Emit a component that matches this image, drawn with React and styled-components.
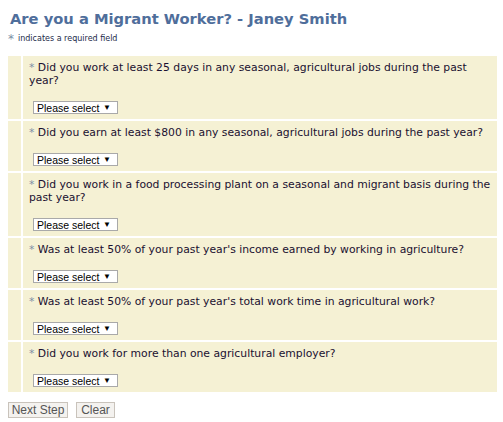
import React from "react";
import styled, { createGlobalStyle } from "styled-components";

const Global = createGlobalStyle`
  html, body { margin: 0; padding: 0; background: #ffffff; }
  body { padding: 8px; font-family: "DejaVu Sans", Verdana, sans-serif; }
`;

const Title = styled.h1`
  margin: 0;
  padding: 2px 0 0 2px;
  font-family: "DejaVu Sans", Verdana, sans-serif;
  font-weight: bold;
  font-size: 14.7px;
  line-height: 18px;
  color: #4f6e9b;
`;

const Note = styled.div`
  margin-top: 5px;
  font-size: 8px;
  line-height: 12px;
  color: #1c2b4a;
  display: flex;
  align-items: flex-start;
  gap: 4px;
`;

const Star = styled.span`
  color: #7b8fa6;
  font-size: ${(p) => p.$size || 10.8}px;
`;

const Table = styled.div`
  margin-top: 11px;
  width: 489px;
  display: flex;
  flex-direction: column;
  gap: 2px;
`;

const Row = styled.div`
  display: grid;
  grid-template-columns: 13px 1fr;
  gap: 2px;
`;

const Side = styled.div`
  background: #f5f1d4;
`;

const Cell = styled.div`
  background: #f5f1d4;
  padding: 5px 0 5px 6px;
`;

const Question = styled.div`
  font-size: 10.8px;
  line-height: 13px;
  color: #1a1030;
`;

const Select = styled.div`
  margin: 14px 0 0 4px;
  display: flex;
  align-items: center;
  justify-content: space-between;
  box-sizing: border-box;
  width: 85px;
  height: 13px;
  padding: 0 6px 0 3px;
  background: #ffffff;
  border: 1px solid #a9a9a9;
  font-family: "Liberation Sans", Arial, sans-serif;
  font-size: 10.5px;
  white-space: nowrap;
  color: #000;
`;

const Arrow = styled.span`
  font-size: 8px;
`;

const Buttons = styled.div`
  margin-top: 10px;
  display: flex;
  gap: 8px;
`;

const Button = styled.button`
  font-family: "Liberation Sans", Arial, sans-serif;
  font-size: 12px;
  color: #555;
  background: #f4f2ef;
  border: 1px solid #c9c3bb;
  padding: 0;
  width: ${(p) => p.$w}px;
  height: 16px;
  line-height: 14px;
  margin: 0;
`;

const questions = [
  "Did you work at least 25 days in any seasonal, agricultural jobs during the past year?",
  "Did you earn at least $800 in any seasonal, agricultural jobs during the past year?",
  "Did you work in a food processing plant on a seasonal and migrant basis during the past year?",
  "Was at least 50% of your past year's income earned by working in agriculture?",
  "Was at least 50% of your past year's total work time in agricultural work?",
  "Did you work for more than one agricultural employer?",
];

export default function App() {
  return (
    <>
      <Global />
      <Title>Are you a Migrant Worker? - Janey Smith</Title>
      <Note>
        <Star $size={12}>*</Star>
        <span>indicates a required field</span>
      </Note>
      <Table>
        {questions.map((q) => (
          <Row key={q}>
            <Side />
            <Cell>
              <Question>
                <Star>*</Star> {q}
              </Question>
              <Select>
                <span>Please select</span>
                <Arrow>▼</Arrow>
              </Select>
            </Cell>
          </Row>
        ))}
      </Table>
      <Buttons>
        <Button $w={60}>Next Step</Button>
        <Button $w={39}>Clear</Button>
      </Buttons>
    </>
  );
}
